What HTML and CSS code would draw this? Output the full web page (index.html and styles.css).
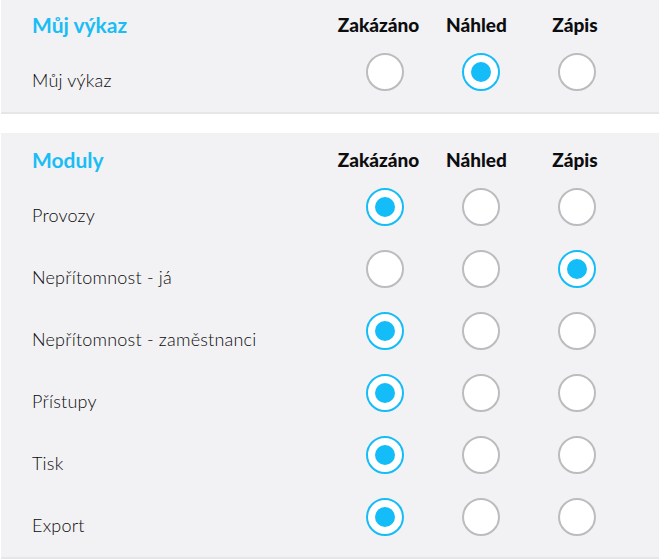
FILE: index.html
```html
<!DOCTYPE html>
<html lang="cs">
<head>
<meta charset="utf-8">
<title>Oprávnění</title>
<link rel="stylesheet" href="styles.css">
</head>
<body>
<div class="page">
  <section class="card card-first">
    <div class="row head">
      <div class="title">Můj výkaz</div>
      <div class="col-h h1">Zakázáno</div>
      <div class="col-h h2">Náhled</div>
      <div class="col-h h3">Zápis</div>
    </div>
    <div class="row item">
      <div class="label">Můj výkaz</div>
      <div class="cell"><span class="radio"></span></div>
      <div class="cell"><span class="radio on"></span></div>
      <div class="cell"><span class="radio"></span></div>
    </div>
  </section>

  <section class="card">
    <div class="row head">
      <div class="title">Moduly</div>
      <div class="col-h h1">Zakázáno</div>
      <div class="col-h h2">Náhled</div>
      <div class="col-h h3">Zápis</div>
    </div>
    <div class="row item">
      <div class="label">Provozy</div>
      <div class="cell"><span class="radio on"></span></div>
      <div class="cell"><span class="radio"></span></div>
      <div class="cell"><span class="radio"></span></div>
    </div>
    <div class="row item">
      <div class="label">Nepřítomnost - já</div>
      <div class="cell"><span class="radio"></span></div>
      <div class="cell"><span class="radio"></span></div>
      <div class="cell"><span class="radio on"></span></div>
    </div>
    <div class="row item">
      <div class="label">Nepřítomnost - zaměstnanci</div>
      <div class="cell"><span class="radio on"></span></div>
      <div class="cell"><span class="radio"></span></div>
      <div class="cell"><span class="radio"></span></div>
    </div>
    <div class="row item">
      <div class="label">Přístupy</div>
      <div class="cell"><span class="radio on"></span></div>
      <div class="cell"><span class="radio"></span></div>
      <div class="cell"><span class="radio"></span></div>
    </div>
    <div class="row item">
      <div class="label">Tisk</div>
      <div class="cell"><span class="radio on"></span></div>
      <div class="cell"><span class="radio"></span></div>
      <div class="cell"><span class="radio"></span></div>
    </div>
    <div class="row item">
      <div class="label">Export</div>
      <div class="cell"><span class="radio on"></span></div>
      <div class="cell"><span class="radio"></span></div>
      <div class="cell"><span class="radio"></span></div>
    </div>
  </section>
</div>
</body>
</html>
```

FILE: styles.css
```css
* { box-sizing: border-box; }
html, body { margin: 0; padding: 0; background: #ffffff; }
body {
  font-family: "Source Sans Pro", Lato, "Liberation Sans", sans-serif;
  color: #1f1f22;
  overflow: hidden;
}
.page {
  display: flex;
  flex-direction: column;
  gap: 19px;
  margin-top: -2px;
  padding-left: 1px;
}
.card {
  background: #f2f2f4;
  border-bottom: 2px solid #e6e6e9;
  padding: 9px 34px 9px 31px;
}
.row {
  display: grid;
  grid-template-columns: 1fr 96px 96px 96px;
  align-items: center;
}
.head { height: 34px; }
.item { height: 62px; }
.title {
  font-size: 21px;
  font-weight: 700;
  color: #1bbdf6;
}
.col-h {
  font-size: 19px;
  font-weight: 900;
  color: #0d0d0f;
  text-align: center;
  white-space: nowrap;
}
.h1 { padding-right: 13px; }
.h2 { padding-right: 9px; }
.h3 { padding-right: 4px; }
.label {
  font-size: 18px;
  font-weight: 300;
  letter-spacing: 0.2px;
  color: #0a0a0c;
  padding-top: 16px;
}
.cell { display: flex; justify-content: center; }
.radio {
  width: 38px;
  height: 38px;
  border-radius: 50%;
  border: 2px solid #bcbcc0;
  background: #fff;
  display: flex;
  align-items: center;
  justify-content: center;
}
.radio.on { border-color: #14bdf7; }
.radio.on::after {
  content: "";
  width: 20px;
  height: 20px;
  border-radius: 50%;
  background: #14bdf7;
}
```
